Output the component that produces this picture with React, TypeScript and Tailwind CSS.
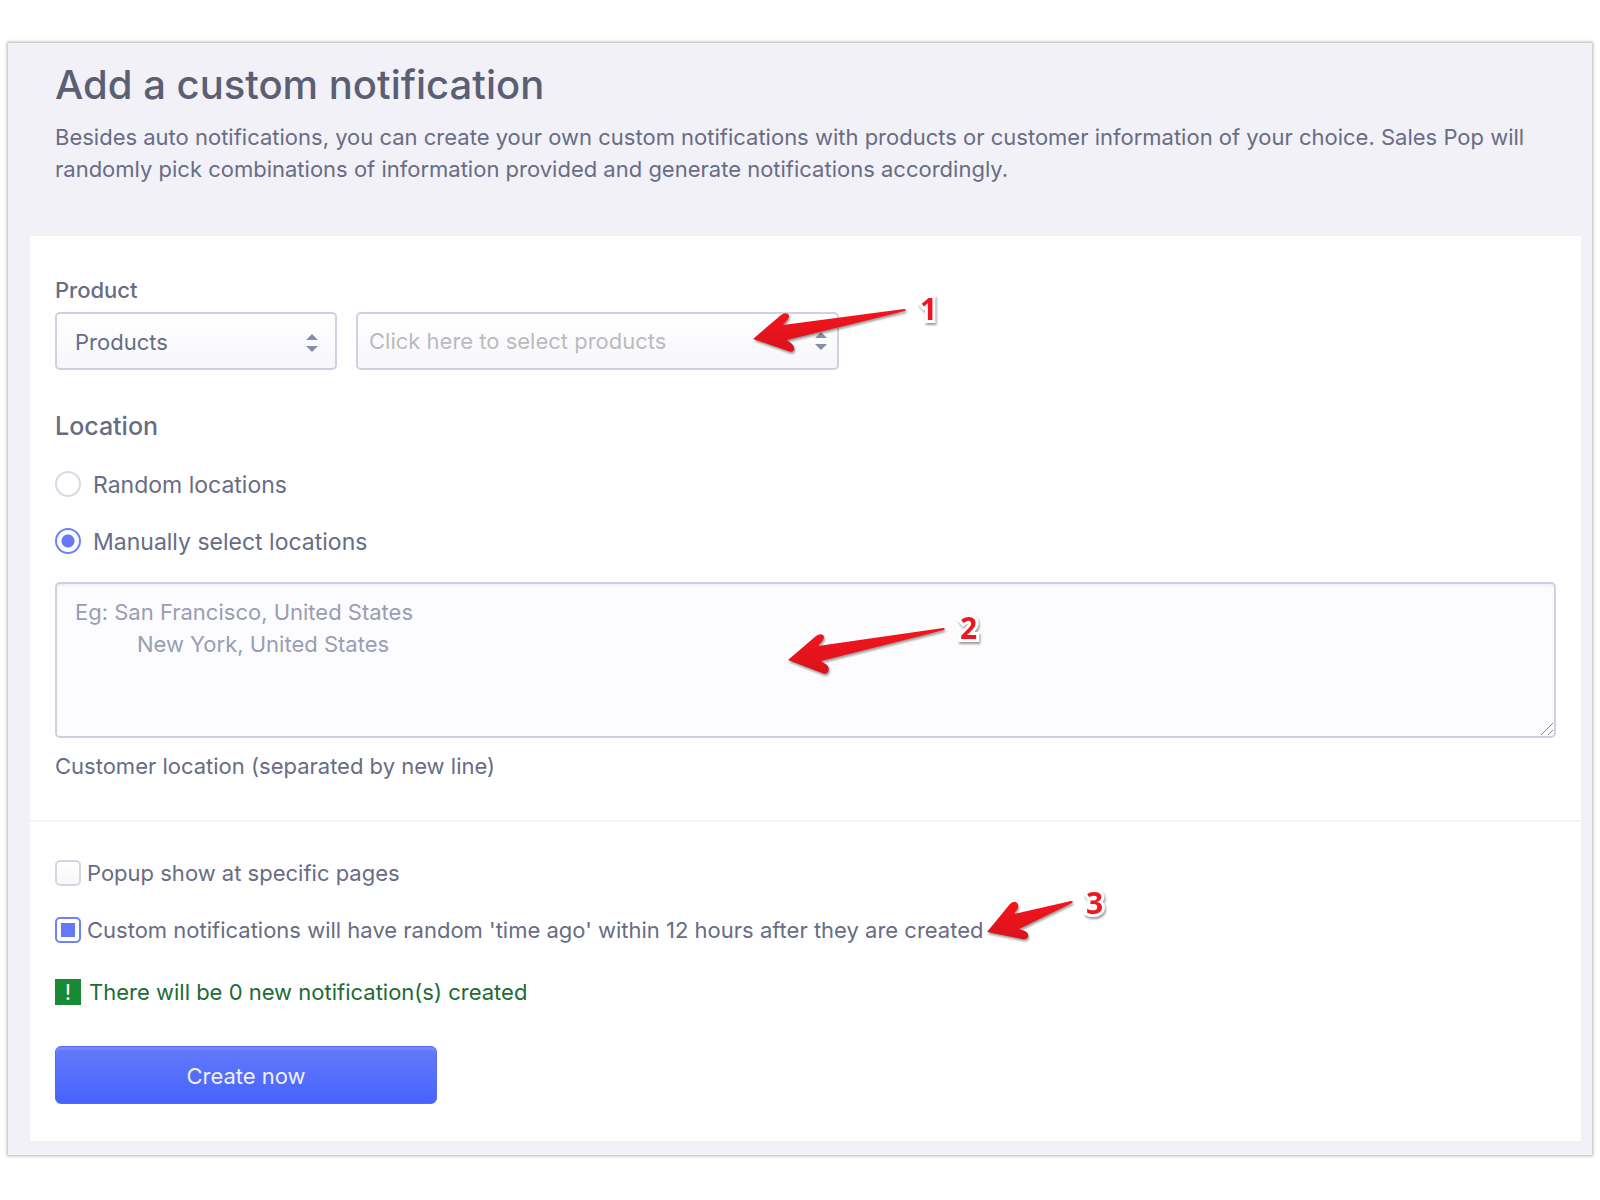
import { useState, type ReactNode } from "react";

function SortCarets() {
  return (
    <svg viewBox="0 0 12 18" className="h-[18px] w-3" aria-hidden="true">
      <path d="M0 6 L6 0 L12 6 Z M0 12 L6 18 L12 12 Z" fill="#898ea6" />
    </svg>
  );
}

function Arrow({ width, height, path, className }: { width: number; height: number; path: string; className: string }) {
  return (
    <svg
      width={width}
      height={height}
      viewBox={`0 0 ${width} ${height}`}
      className={`pointer-events-none absolute overflow-visible drop-shadow-[1px_2px_1px_rgba(0,0,0,0.4)] ${className}`}
      aria-hidden="true"
    >
      <defs>
        <linearGradient id="arrow-red" x1="0" y1="0" x2="0" y2="1">
          <stop offset="0" stopColor="#f5141d" />
          <stop offset="1" stopColor="#d9131a" />
        </linearGradient>
      </defs>
      <path d={path} fill="url(#arrow-red)" />
    </svg>
  );
}

const PRODUCT_ARROW =
  "M0 26 L28 2 Q32 -1 35 1 Q37 3 35 6 L30 12 L151 -4 Q154 -4 152 -2 L34 27 L39 31 Q42 34 41 37 Q39 40 35 38 Z";
const LOCATION_ARROW =
  "M0 26 L28 2 Q32 -1 35 1 Q37 3 35 6 L30 12 L155 -6 Q158 -6 156 -4 L33 27 L39 31 Q42 34 40 38 Q38 41 34 39 Z";
const TIME_ARROW =
  "M0 31 L23 3 Q26 0 29 1 Q32 3 31 7 L27 13 L84 0 Q87 0 85 2 L32 28 L38 30 Q42 32 41 36 Q39 39 35 38 Z";

function Step({ children, className }: { children: ReactNode; className: string }) {
  return (
    <span
      className={`pointer-events-none absolute font-['Open_Sans',sans-serif] text-[30px] leading-8 font-bold text-[#ee1620] drop-shadow-[1px_2px_1px_rgba(0,0,0,0.4)] [-webkit-text-stroke:6px_white] [paint-order:stroke_fill] ${className}`}
    >
      {children}
    </span>
  );
}

const boxStyle =
  "h-[58px] w-full appearance-none rounded-[5px] border-2 border-[#d0d0e1] bg-gradient-to-b from-white to-[#f7f7fb] outline-none";

const radioStyle =
  "size-[26px] shrink-0 appearance-none rounded-full border-2 border-[#d9d9e6] bg-white checked:border-[#6e82fb] checked:bg-[radial-gradient(circle,#6478fa_6px,white_7px)]";

const checkboxStyle =
  "size-[26px] shrink-0 appearance-none rounded-[5px] border-2 border-[#d6d6e3] bg-gradient-to-b from-white to-[#f7f7fb] checked:border-[#6e82fb] checked:bg-[#6478fa] checked:bg-none checked:bg-clip-content checked:p-1";

export default function App() {
  const [place, setPlace] = useState("manual");
  return (
    <div className="px-2 pt-[43px] pb-11 font-[Inter,sans-serif] text-[22px] leading-8 text-[#686c84]">
      <main className="bg-[#f2f1f8] pr-[11px] pb-[14px] pl-[22px] shadow-[0_0_3px_1px_rgba(0,0,0,0.3)]">
        <header className="px-[25px] pt-[18px] pb-[51px]">
          <h1 className="text-[40px] leading-[48px] font-medium text-[#5b5f74]">Add a custom notification</h1>
          <p className="mt-3">
            Besides auto notifications, you can create your own custom notifications with products or customer
            information of your choice. Sales Pop will randomly pick combinations of information provided and generate
            notifications accordingly.
          </p>
        </header>

        <form className="bg-white" onSubmit={(e) => e.preventDefault()}>
          <section className="border-b-2 border-[#f3f3f6] px-[25px] pt-[38px] pb-[38px]">
            <label htmlFor="kind" className="block font-medium">
              Product
            </label>
            <div className="mt-[6px] flex gap-[19px]">
              <div className="relative w-[282px]">
                <select id="kind" className={`${boxStyle} pt-[2px] pl-[18px] text-[#686c84]`}>
                  <option>Products</option>
                </select>
                <span className="pointer-events-none absolute inset-y-0 right-[19px] flex items-center pt-1">
                  <SortCarets />
                </span>
              </div>
              <div className="relative w-[483px]">
                <input
                  aria-label="Select products"
                  placeholder="Click here to select products"
                  className={`${boxStyle} px-[11px] placeholder:text-[#bbbbbd]`}
                />
                <span className="pointer-events-none absolute inset-y-0 right-3 flex items-center">
                  <SortCarets />
                </span>
                <Arrow width={153} height={40} path={PRODUCT_ARROW} className="top-[1px] left-[397px]" />
                <Step className="-top-[19px] left-[564px]">1</Step>
              </div>
            </div>

            <fieldset className="mt-10">
              <legend className="text-[25px] leading-8 font-medium">Location</legend>
              <label className="mt-[25px] flex items-center gap-3 text-[23px]">
                <input
                  type="radio"
                  name="place"
                  checked={place === "random"}
                  onChange={() => setPlace("random")}
                  className={radioStyle}
                />
                <span className="pt-[2px]">Random locations</span>
              </label>
              <label className="mt-[23px] flex items-center gap-3 text-[23px]">
                <input
                  type="radio"
                  name="place"
                  checked={place === "manual"}
                  onChange={() => setPlace("manual")}
                  className={radioStyle}
                />
                <span className="pt-[2px]">Manually select locations</span>
              </label>
            </fieldset>

            <div className="relative mt-6">
              <textarea
                id="locations"
                placeholder={"Eg: San Francisco, United States\n          New York, United States"}
                className="block h-[156px] w-full resize-none rounded-[5px] border-2 border-[#d0d0e1] bg-[#fcfcfe] px-[18px] py-3 shadow-[inset_0_2px_2px_rgba(90,90,130,0.08)] outline-none placeholder:text-[#9a9db3]"
              />
              <svg
                viewBox="0 0 12 12"
                className="pointer-events-none absolute right-[3px] bottom-[3px] size-3"
                aria-hidden="true"
              >
                <path d="M0 12 L12 0 M7 12 L12 7" stroke="#85858c" strokeWidth="1" fill="none" />
              </svg>
              <Arrow width={157} height={40} path={LOCATION_ARROW} className="top-[52px] left-[733px]" />
              <Step className="top-[30px] left-[905px]">2</Step>
            </div>
            <label htmlFor="locations" className="mt-3 block">
              Customer location (separated by new line)
            </label>
          </section>

          <section className="px-[25px] pt-[35px] pb-[37px]">
            <label className="flex items-center gap-[6px]">
              <input type="checkbox" className={checkboxStyle} />
              Popup show at specific pages
            </label>
            <div className="relative mt-[25px]">
              <label className="flex items-center gap-[6px]">
                <input type="checkbox" defaultChecked className={checkboxStyle} />
                Custom notifications will have random 'time ago' within 12 hours after they are created
              </label>
              <Arrow width={86} height={38} path={TIME_ARROW} className="-top-[13px] left-[932px]" />
              <Step className="-top-[27px] left-[1031px]">3</Step>
            </div>
            <p className="mt-[30px] flex items-center gap-2 text-[#1d6b36]">
              <span className="flex size-[26px] items-center justify-center bg-[#178a33] text-white">!</span>
              There will be 0 new notification(s) created
            </p>
            <button className="mt-[38px] h-[58px] w-[382px] rounded-[6px] border border-[#5369f8] bg-gradient-to-b from-[#6479fb] to-[#4763fc] pt-[2px] text-[#eef0ff] shadow-[inset_0_3px_1px_rgba(255,255,255,0.12)]">
              Create now
            </button>
          </section>
        </form>
      </main>
    </div>
  );
}
